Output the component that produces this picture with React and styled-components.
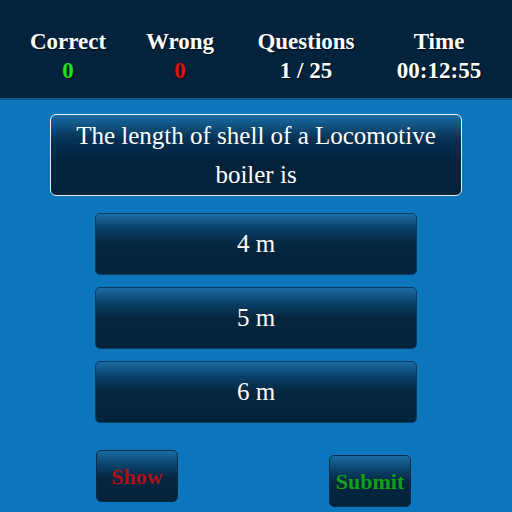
import React from 'react';
import styled, { createGlobalStyle } from 'styled-components';

const GlobalStyle = createGlobalStyle`
    html, body {
        margin: 0;
        padding: 0;
        background: #0b76bc;
        font-family: "Liberation Serif", "Times New Roman", serif;
    }
`;

const Page = styled.div`
    width: 512px;
    height: 512px;
    background: #0b76bc;
    overflow: hidden;
`;

const Header = styled.div`
    height: 100px;
    background: #03223b;
    border-bottom: 2px solid #0a5a92;
    box-sizing: border-box;
    display: grid;
    grid-template-columns: 136px 88px 164px 102px;
    align-content: start;
    padding-top: 27px;
`;

const Stat = styled.div`
    display: flex;
    flex-direction: column;
    align-items: center;
    font-weight: bold;
    font-size: 23px;
    line-height: 29px;
    color: #ffffff;
    text-shadow: 1px 1px 1px rgba(0, 0, 0, 0.6);
`;

const StatValue = styled.span`
    color: ${p => p.color || '#ffffff'};
`;

const Body = styled.div`
    display: flex;
    flex-direction: column;
    align-items: center;
    padding-top: 14px;
`;

const Question = styled.div`
    width: 412px;
    height: 82px;
    box-sizing: border-box;
    border: 1px solid #e8eef3;
    border-radius: 6px;
    background: linear-gradient(to bottom, #1a6da6 0%, #063052 30%, #03223b 60%, #03223b 100%);
    color: #ffffff;
    font-size: 25px;
    line-height: 39px;
    text-align: center;
    padding-top: 1px;
`;

const Options = styled.div`
    display: flex;
    flex-direction: column;
    gap: 12px;
    margin-top: 17px;
`;

const Option = styled.div`
    width: 322px;
    height: 62px;
    box-sizing: border-box;
    border: 1px solid #0a3a5e;
    border-radius: 5px;
    background: linear-gradient(to bottom, #1a6ca4 0%, #0a3f66 25%, #04263f 50%, #03223b 100%);
    color: #ffffff;
    font-size: 25px;
    display: flex;
    align-items: center;
    justify-content: center;
    padding-bottom: 1px;
`;

const Actions = styled.div`
    width: 315px;
    margin-right: 5px;
    display: flex;
    justify-content: space-between;
    align-items: flex-start;
    margin-top: 27px;
`;

const ActionButton = styled.div`
    width: 82px;
    height: 52px;
    box-sizing: border-box;
    margin-top: ${p => p.offset || 0}px;
    border: 1px solid #062a47;
    border-radius: 5px;
    background: linear-gradient(to bottom, #1a6ca4 0%, #0a3f66 30%, #04263f 55%, #03223b 100%);
    color: ${p => p.color};
    font-weight: bold;
    font-size: 22px;
    display: flex;
    align-items: center;
    justify-content: center;
    padding-top: 2px;
`;

export default function App() {
    return (
        <Page>
            <GlobalStyle />
            <Header>
                <Stat>Correct<StatValue color="#19e619">0</StatValue></Stat>
                <Stat>Wrong<StatValue color="#e01010">0</StatValue></Stat>
                <Stat>Questions<StatValue>1 / 25</StatValue></Stat>
                <Stat>Time<StatValue>00:12:55</StatValue></Stat>
            </Header>
            <Body>
                <Question>The length of shell of a Locomotive boiler is</Question>
                <Options>
                    <Option>4 m</Option>
                    <Option>5 m</Option>
                    <Option>6 m</Option>
                </Options>
                <Actions>
                    <ActionButton color="#b0101a">Show</ActionButton>
                    <ActionButton color="#14a014" offset={5}>Submit</ActionButton>
                </Actions>
            </Body>
        </Page>
    );
}
